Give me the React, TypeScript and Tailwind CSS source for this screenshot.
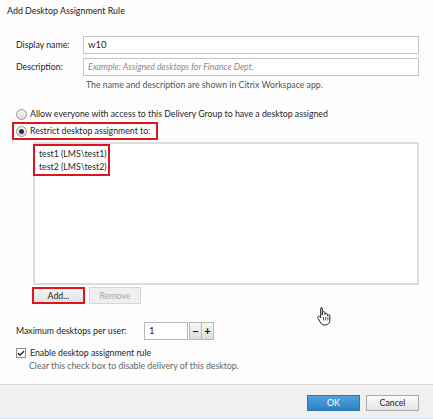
import { Check } from "lucide-react";

function Radio({ checked }: { checked?: boolean }) {
  return (
    <span className="flex h-[11px] w-[11px] shrink-0 items-center justify-center rounded-full border border-[#9a9a9a] bg-gradient-to-b from-[#f4f4f4] to-[#dcdcdc]">
      {checked && <span className="h-[5px] w-[5px] rounded-full bg-[#333]" />}
    </span>
  );
}

function HandCursor() {
  return (
    <svg width="16" height="20" viewBox="0 0 16 20" className="absolute left-[316px] top-[306px]">
      <path
        d="M5 1.5c.8 0 1.3.6 1.3 1.4v6.2l.1-2.2c0-.8.6-1.3 1.3-1.3s1.3.5 1.3 1.3v1.6c.1-.7.6-1.1 1.3-1.1s1.2.5 1.2 1.2v1.2c.1-.6.6-1 1.2-1 .7 0 1.2.5 1.2 1.2v4.3c0 2.6-1.8 4.7-4.6 4.7H8.3c-1.6 0-2.7-.7-3.6-2L1.9 12c-.4-.6-.2-1.3.3-1.6.6-.4 1.3-.2 1.7.4l.8 1.1V2.9c0-.8.5-1.4 1.3-1.4z"
        fill="#fff"
        stroke="#222"
        strokeWidth="1"
        strokeLinejoin="round"
      />
      <path d="M7.5 11v3.5M9.7 11v3.5M11.9 11v3.5" stroke="#222" strokeWidth="0.8" />
    </svg>
  );
}

export default function App() {
  return (
    <div className="relative flex h-[419px] w-[433px] flex-col overflow-hidden whitespace-nowrap bg-[#fdfdfd] font-['Lato','Noto_Sans',sans-serif] text-[8.75px] text-[#1f1f1f]">
      {/* title */}
      <div className="h-[22px] pl-[7px] pt-[4px] text-[8.9px] leading-[13px] text-[#222]">Add Desktop Assignment Rule</div>

      <div className="flex flex-1 flex-col pl-[16px] pr-[14px]">
        {/* name + description */}
        <div className="mt-[14px] flex h-[18px] items-center">
          <span className="w-[67px]">Display name:</span>
          <div className="flex h-[18px] flex-1 items-center border border-[#c4c4c4] bg-white px-[4px] text-[9.5px]">w10</div>
        </div>
        <div className="mt-[4px] flex h-[18px] items-center">
          <span className="w-[67px]">Description:</span>
          <div className="flex h-[18px] flex-1 items-center border border-[#c4c4c4] bg-white px-[4px] italic text-[#8a8a8a]">
            Example: Assigned desktops for Finance Dept.
          </div>
        </div>
        <div className="mt-[2px] pl-[70px] leading-[14px] text-[#555]">The name and description are shown in Citrix Workspace app.</div>

        {/* radios */}
        <div className="mt-[14px] flex h-[16px] items-center gap-[3px]">
          <Radio />
          <span>Allow everyone with access to this Delivery Group to have a desktop assigned</span>
        </div>
        <div className="-ml-[4px] flex h-[18px] w-[146px] items-center gap-[3px] border-2 border-[#e0141e] pl-[2px]">
          <Radio checked />
          <span>Restrict desktop assignment to:</span>
        </div>

        {/* list */}
        <div className="ml-[17px] mt-[2px] h-[143px] border-2 border-[#dcdcdc] bg-white">
          <div className="-ml-[2px] w-[77px] border-2 border-[#e0141e] py-[1px] pl-[4px] leading-[13px]">
            <div>test1 (LMS\test1)</div>
            <div>test2 (LMS\test2)</div>
          </div>
        </div>

        {/* add / remove */}
        <div className="ml-[16px] mt-[2px] flex h-[17px] gap-[4px]">
          <div className="flex w-[53px] items-center justify-center border-2 border-[#e0141e] bg-gradient-to-b from-[#f6f6f6] to-[#e2e2e2]">Add...</div>
          <div className="flex w-[52px] items-center justify-center border border-[#d6d6d6] bg-[#efefef] text-[#a8a8a8]">Remove</div>
        </div>

        {/* max */}
        <div className="mt-[18px] flex h-[18px] items-center">
          <span className="w-[128px]">Maximum desktops per user:</span>
          <div className="flex h-[18px] w-[44px] items-center border border-[#b8b8b8] bg-white px-[4px] text-[9.5px]">1</div>
          <div className="ml-[1px] flex h-[18px] w-[13px] items-center justify-center border border-[#b8b8b8] bg-gradient-to-b from-[#f6f6f6] to-[#dedede] text-[12px] font-bold leading-none">−</div>
          <div className="flex h-[18px] w-[12px] items-center justify-center border border-l-0 border-[#b8b8b8] bg-gradient-to-b from-[#f6f6f6] to-[#dedede] text-[12px] font-bold leading-none">+</div>
        </div>

        {/* checkbox */}
        <div className="mt-[7px] flex h-[12px] items-center gap-[4px]">
          <span className="flex h-[10px] w-[10px] items-center justify-center border border-[#8e8e8e] bg-white">
            <Check size={9} strokeWidth={4} className="text-[#222]" />
          </span>
          <span>Enable desktop assignment rule</span>
        </div>
        <div className="pl-[13px] leading-[13px] text-[#666]">Clear this check box to disable delivery of this desktop.</div>
      </div>

      {/* footer */}
      <div className="flex h-[33px] items-start justify-end gap-[6px] border-t border-[#d6d6d6] bg-[#f0f0f0] pr-[14px] pt-[10px]">
        <div className="flex h-[16px] w-[53px] items-center justify-center border border-[#2a76b4] bg-gradient-to-b from-[#4fa3dd] to-[#2c82c4] text-white">OK</div>
        <div className="flex h-[16px] w-[53px] items-center justify-center border border-[#a9a9a9] bg-gradient-to-b from-[#fafafa] to-[#e4e4e4]">Cancel</div>
      </div>
      <div className="h-[2px] bg-[#d8ecf6]" />

      <HandCursor />
    </div>
  );
}
